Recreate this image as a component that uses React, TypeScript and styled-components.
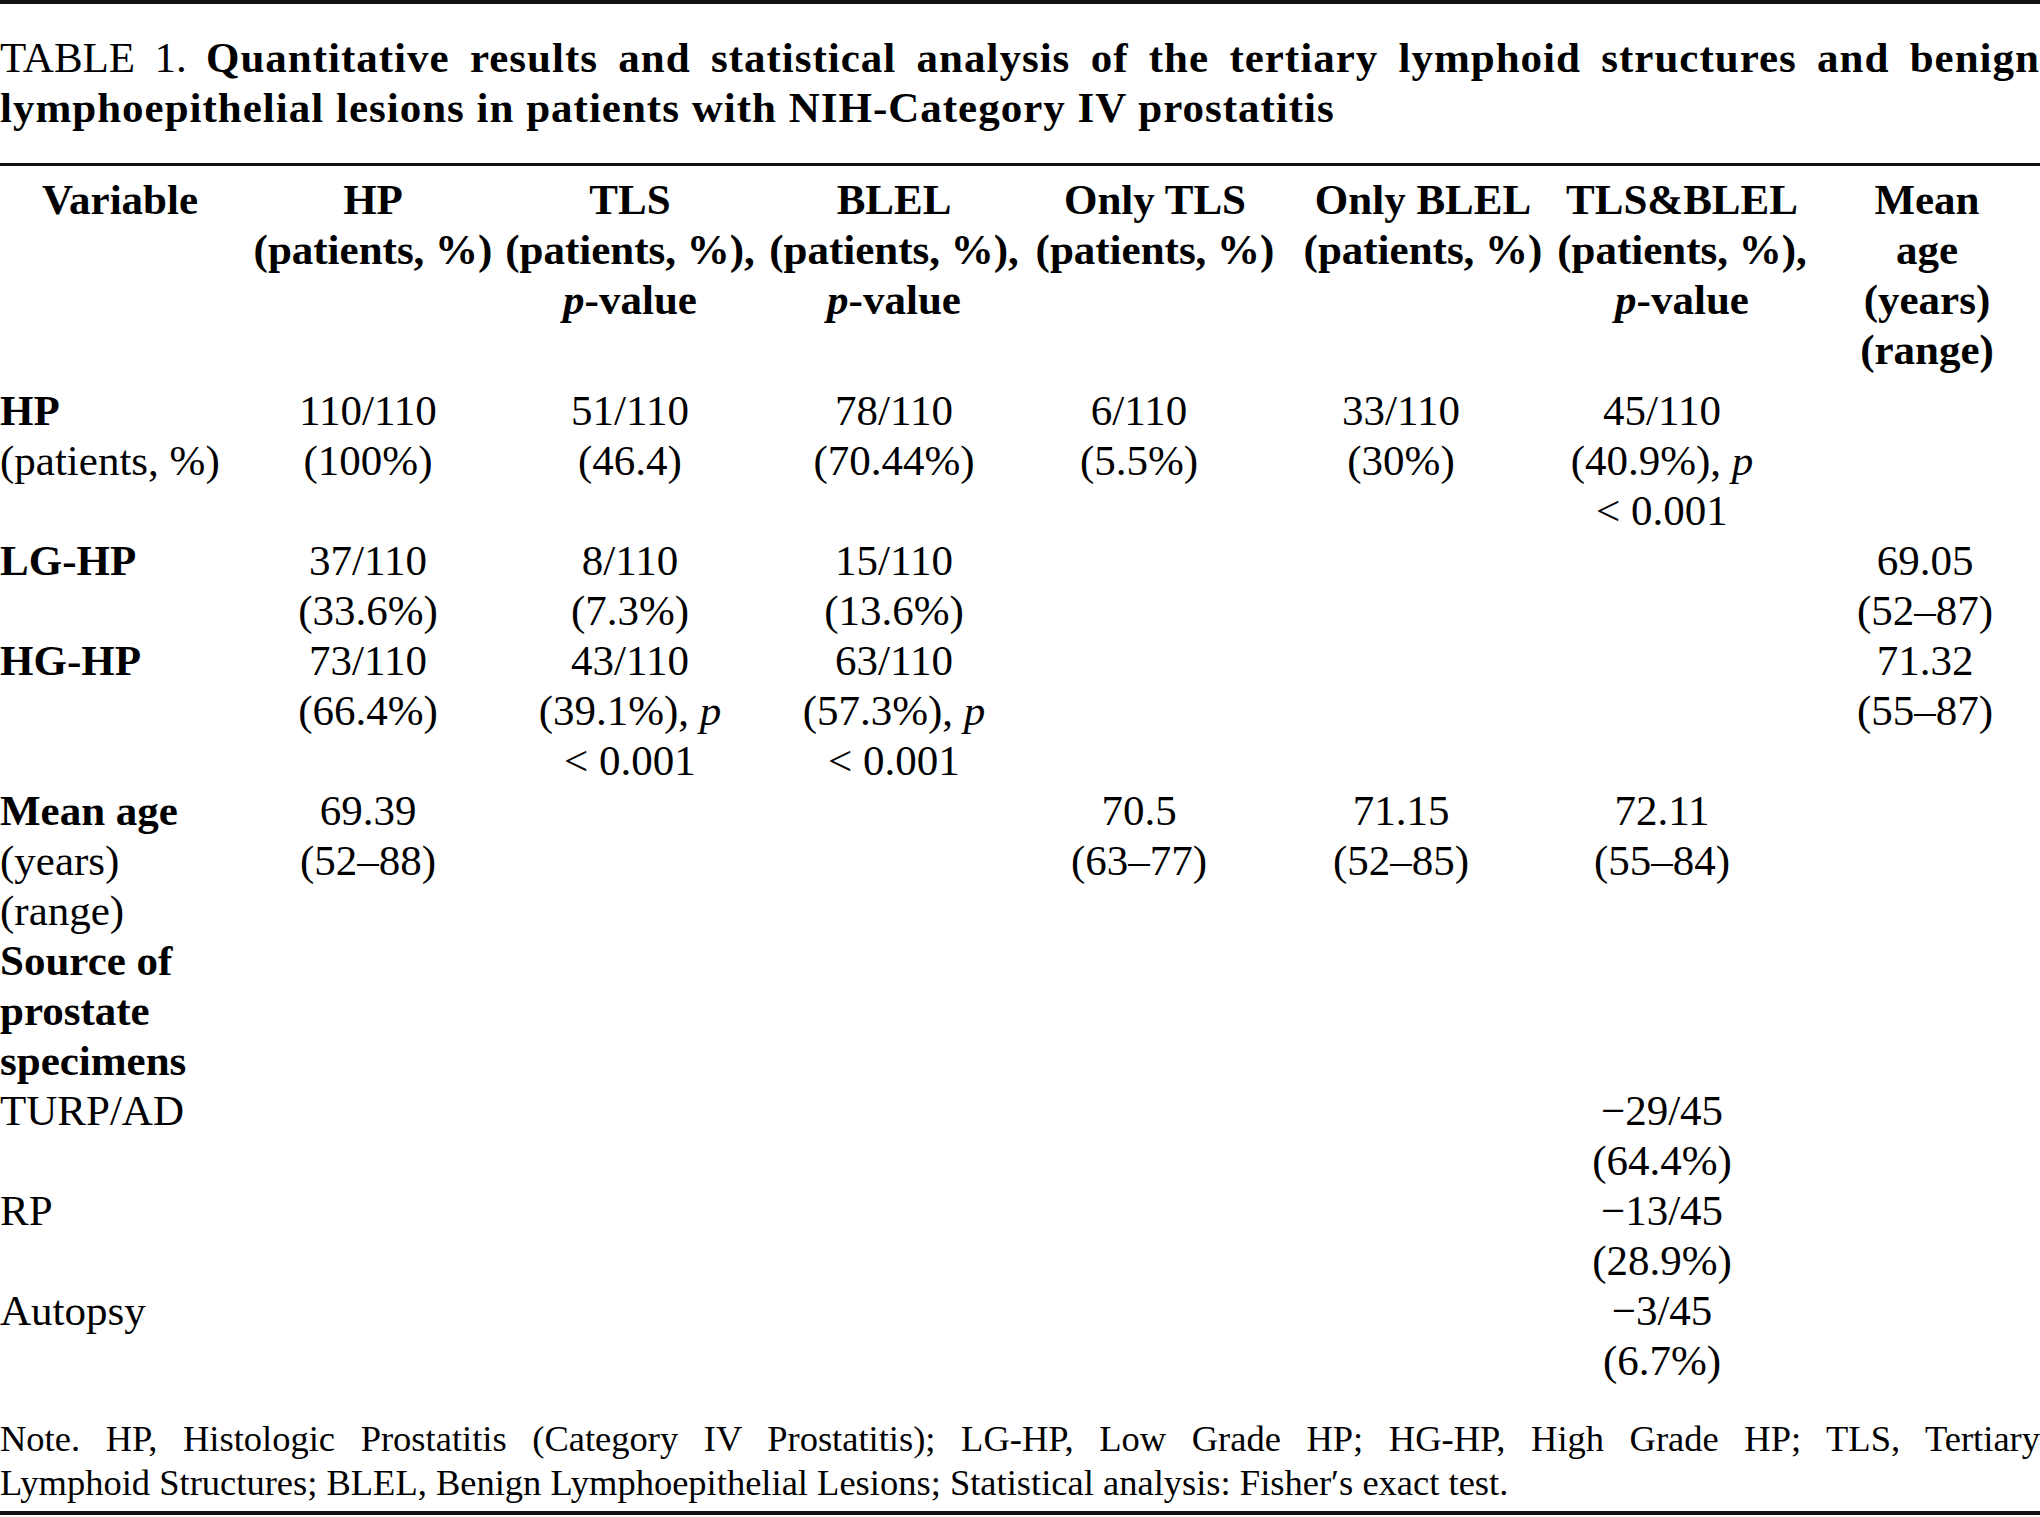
import React from "react";
import styled, { createGlobalStyle } from "styled-components";

const GlobalStyle = createGlobalStyle`
  html, body {
    margin: 0;
    padding: 0;
    background: #ffffff;
  }
  body {
    font-family: "Liberation Serif", "Times New Roman", serif;
    color: #000000;
  }
`;

const Page = styled.div`
  width: 2040px;
  display: flex;
  flex-direction: column;
`;

const Rule = styled.div<{ $thick: number; $before: number }>`
  height: 0;
  border-top: ${(p) => p.$thick}px solid #111111;
  margin-top: ${(p) => p.$before}px;
`;

const Caption = styled.div`
  margin-top: 29px;
  font-size: 43px;
  line-height: 50px;
`;

const CaptionLine = styled.div<{ $justify?: boolean }>`
  white-space: ${(p) => (p.$justify ? "normal" : "nowrap")};
  text-align: ${(p) => (p.$justify ? "justify" : "left")};
  text-align-last: ${(p) => (p.$justify ? "justify" : "left")};
`;

const Strong = styled.span`
  font-weight: 700;
  letter-spacing: 1px;
`;

const Ital = styled.span`
  font-style: italic;
`;

const Grid = styled.div`
  display: grid;
  grid-template-columns: 274px 188px 336px 192px 298px 226px 296px 230px;
  font-size: 43px;
  line-height: 50px;
  padding-top: 9px;
`;

const HeadCell = styled.div<{ $shift?: number }>`
  display: flex;
  flex-direction: column;
  align-items: center;
  font-weight: 700;
  padding-bottom: 11px;
  padding-left: ${(p) => (p.$shift && p.$shift > 0 ? p.$shift * 2 : 0)}px;
  padding-right: ${(p) => (p.$shift && p.$shift < 0 ? -p.$shift * 2 : 0)}px;
`;

const Cell = styled.div<{ $left?: boolean }>`
  display: flex;
  flex-direction: column;
  align-items: ${(p) => (p.$left ? "flex-start" : "center")};
`;

const Line = styled.span<{ $bold?: boolean }>`
  display: block;
  white-space: nowrap;
  font-weight: ${(p) => (p.$bold ? 700 : 400)};
`;

const Note = styled.div`
  margin-top: 31px;
  font-size: 36.5px;
  line-height: 44px;
`;

type VarLine = { text: string; bold?: boolean };
type Row = { label: VarLine[]; values: React.ReactNode[][] };

const P = () => <Ital>p</Ital>;

const headers: { lines: React.ReactNode[]; shift?: number }[] = [
  { lines: ["Variable"], shift: -17 },
  { lines: ["HP", "(patients, %)"], shift: 5 },
  { lines: ["TLS", "(patients, %),", <><Ital>p</Ital>-value</>] },
  { lines: ["BLEL", "(patients, %),", <><Ital>p</Ital>-value</>] },
  { lines: ["Only TLS", "(patients, %)"], shift: 16 },
  { lines: ["Only BLEL", "(patients, %)"], shift: 22 },
  { lines: ["TLS&BLEL", "(patients, %),", <><Ital>p</Ital>-value</>], shift: 20 },
  { lines: ["Mean", "age", "(years)", "(range)"], shift: 2 },
];

const rows: Row[] = [
  {
    label: [{ text: "HP", bold: true }, { text: "(patients, %)" }],
    values: [
      ["110/110", "(100%)"],
      ["51/110", "(46.4)"],
      ["78/110", "(70.44%)"],
      ["6/110", "(5.5%)"],
      ["33/110", "(30%)"],
      ["45/110", <>(40.9%), <P /></>, "< 0.001"],
      [],
    ],
  },
  {
    label: [{ text: "LG-HP", bold: true }],
    values: [
      ["37/110", "(33.6%)"],
      ["8/110", "(7.3%)"],
      ["15/110", "(13.6%)"],
      [],
      [],
      [],
      ["69.05", "(52–87)"],
    ],
  },
  {
    label: [{ text: "HG-HP", bold: true }],
    values: [
      ["73/110", "(66.4%)"],
      ["43/110", <>(39.1%), <P /></>, "< 0.001"],
      ["63/110", <>(57.3%), <P /></>, "< 0.001"],
      [],
      [],
      [],
      ["71.32", "(55–87)"],
    ],
  },
  {
    label: [{ text: "Mean age", bold: true }, { text: "(years)" }, { text: "(range)" }],
    values: [
      ["69.39", "(52–88)"],
      [],
      [],
      ["70.5", "(63–77)"],
      ["71.15", "(52–85)"],
      ["72.11", "(55–84)"],
      [],
    ],
  },
  {
    label: [
      { text: "Source of", bold: true },
      { text: "prostate", bold: true },
      { text: "specimens", bold: true },
    ],
    values: [[], [], [], [], [], [], []],
  },
  {
    label: [{ text: "TURP/AD" }],
    values: [[], [], [], [], [], ["−29/45", "(64.4%)"], []],
  },
  {
    label: [{ text: "RP" }],
    values: [[], [], [], [], [], ["−13/45", "(28.9%)"], []],
  },
  {
    label: [{ text: "Autopsy" }],
    values: [[], [], [], [], [], ["−3/45", "(6.7%)"], []],
  },
];

export default function App() {
  return (
    <Page>
      <GlobalStyle />
      <Rule $thick={4} $before={0} />
      <Caption>
        <CaptionLine $justify>
          TABLE 1. <Strong>Quantitative results and statistical analysis of the tertiary lymphoid structures and benign</Strong>
        </CaptionLine>
        <CaptionLine>
          <Strong>lymphoepithelial lesions in patients with NIH-Category IV prostatitis</Strong>
        </CaptionLine>
      </Caption>
      <Rule $thick={3} $before={30} />
      <Grid>
        {headers.map((h, i) => (
          <HeadCell key={`h${i}`} $shift={h.shift}>
            {h.lines.map((l, j) => (
              <Line key={j} $bold>
                {l}
              </Line>
            ))}
          </HeadCell>
        ))}
        {rows.map((r, ri) => (
          <React.Fragment key={`r${ri}`}>
            <Cell $left>
              {r.label.map((l, j) => (
                <Line key={j} $bold={l.bold}>
                  {l.text}
                </Line>
              ))}
            </Cell>
            {r.values.map((v, ci) => (
              <Cell key={ci}>
                {v.map((l, j) => (
                  <Line key={j}>{l}</Line>
                ))}
              </Cell>
            ))}
          </React.Fragment>
        ))}
      </Grid>
      <Note>
        <CaptionLine $justify>
          Note. HP, Histologic Prostatitis (Category IV Prostatitis); LG-HP, Low Grade HP; HG-HP, High Grade HP; TLS, Tertiary
        </CaptionLine>
        <CaptionLine>
          Lymphoid Structures; BLEL, Benign Lymphoepithelial Lesions; Statistical analysis: Fisher′s exact test.
        </CaptionLine>
      </Note>
      <Rule $thick={4} $before={6} />
    </Page>
  );
}
